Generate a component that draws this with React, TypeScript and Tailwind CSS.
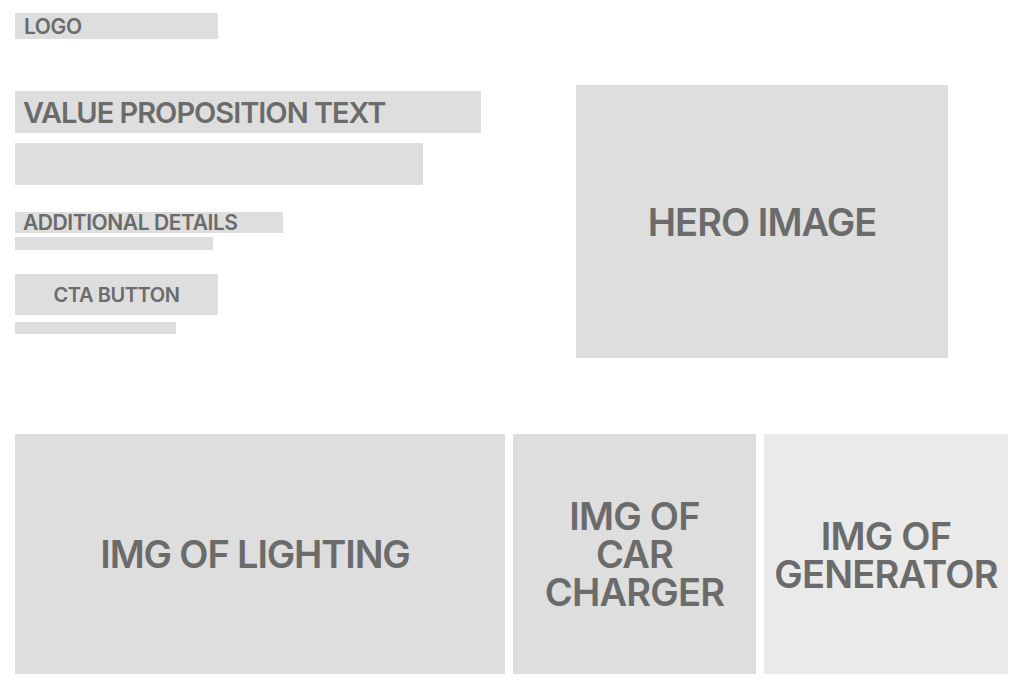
import React from 'react'

const font = { fontFamily: 'Inter, "Noto Sans", sans-serif' }

const Block = ({
  className,
  children
}: {
  className?: string
  children?: React.ReactNode
}) => <div className={`bg-[#dedede] ${className ?? ''}`}>{children}</div>

const Tile = ({
  lines,
  className
}: {
  lines: string[]
  className?: string
}) => (
  <div
    className={`flex h-full flex-col items-center justify-center text-center text-[38px] font-semibold leading-[38px] text-[#6b6b6b] ${className ?? 'tracking-[-0.02em]'}`}
  >
    {lines.map((l) => (
      <div key={l}>{l}</div>
    ))}
  </div>
)

export default function App() {
  return (
    <div className="min-h-[683px] bg-white pl-[15px] pt-[13px]" style={font}>
      <Block className="flex h-[26px] w-[203px] items-center pl-[9px]">
        <span className="text-[21px] font-semibold leading-none tracking-[-0.02em] text-[#6b6b6b]">
          LOGO
        </span>
      </Block>

      <div className="mt-[46px] flex">
        <div className="mt-[6px] flex w-[466px] flex-col">
          <Block className="flex h-[42px] w-[466px] items-center pl-[8px]">
            <span className="text-[29px] font-semibold leading-none tracking-[-0.035em] text-[#6b6b6b]">
              VALUE PROPOSITION TEXT
            </span>
          </Block>
          <Block className="mt-[10px] h-[42px] w-[408px]" />

          <Block className="mt-[27px] flex h-[21px] w-[268px] items-center pl-[8px]">
            <span className="text-[21px] font-semibold leading-none tracking-[-0.02em] text-[#6b6b6b]">
              ADDITIONAL DETAILS
            </span>
          </Block>
          <Block className="mt-[4px] h-[13px] w-[198px]" />

          <Block className="mt-[24px] flex h-[41px] w-[203px] items-center justify-center">
            <span className="text-[20px] font-semibold leading-none tracking-[-0.02em] text-[#6b6b6b]">
              CTA BUTTON
            </span>
          </Block>
          <Block className="mt-[7px] h-[12px] w-[161px]" />
        </div>

        <Block className="ml-[95px] h-[273px] w-[372px]">
          <Tile lines={['HERO IMAGE']} className="tracking-[-0.025em]" />
        </Block>
      </div>

      <div className="mt-[76px] flex h-[240px] w-[993px] gap-[8px]">
        <Block className="w-[490px]">
          <Tile lines={['IMG OF LIGHTING']} className="pr-[10px] tracking-[-0.03em]" />
        </Block>
        <Block className="w-[243px]">
          <Tile lines={['IMG OF', 'CAR', 'CHARGER']} />
        </Block>
        <div className="flex-1 bg-[#eaeaea]">
          <Tile lines={['IMG OF', 'GENERATOR']} className="pt-[2px] tracking-[-0.02em]" />
        </div>
      </div>
    </div>
  )
}
